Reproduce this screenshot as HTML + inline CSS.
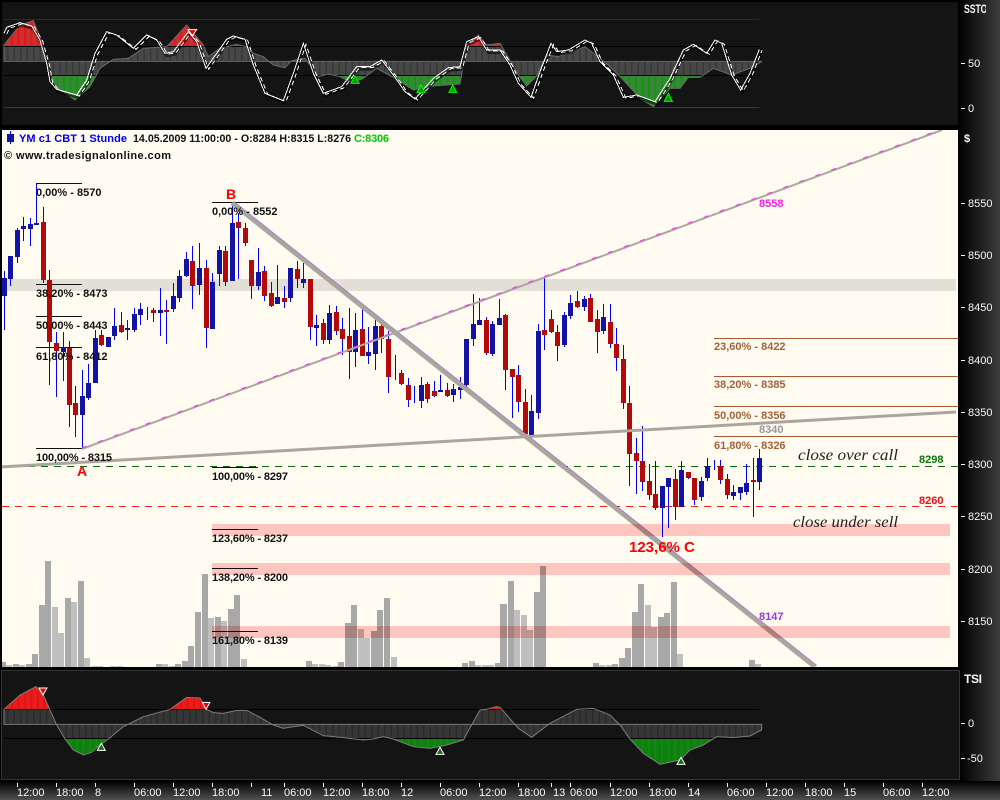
<!DOCTYPE html>
<html><head><meta charset="utf-8"><title>YM c1 CBT 1 Stunde</title>
<style>html,body{margin:0;padding:0;background:#000;width:1000px;height:800px;overflow:hidden}svg{display:block}
text{font-family:"Liberation Sans",sans-serif}
.ax{fill:#f8f8f0;font-size:11px}.fib{fill:#111;font-size:11px;font-weight:bold}.br{fill:#a5623a;font-size:11px;font-weight:bold}
.hw{font-family:"Liberation Serif",serif;font-style:italic;fill:#222;font-size:16px}</style></head>
<body>
<svg width="1000" height="800" viewBox="0 0 1000 800" xmlns="http://www.w3.org/2000/svg">
<defs>
<linearGradient id="rg" x1="0" x2="1"><stop offset="0" stop-color="#000"/><stop offset="1" stop-color="#3c3c3c"/></linearGradient>
<linearGradient id="bg" x1="0" x2="0" y1="0" y2="1"><stop offset="0" stop-color="#000"/><stop offset="1" stop-color="#505050"/></linearGradient>
<pattern id="pg" patternUnits="userSpaceOnUse" x="6" y="0" width="19.5" height="10"><rect width="19.5" height="10" fill="#383838"/><rect width="15" height="10" fill="#474747"/></pattern>
<pattern id="pr" patternUnits="userSpaceOnUse" x="6" y="0" width="19.5" height="10"><rect width="19.5" height="10" fill="#c93030"/><rect x="8" width="5" height="10" fill="#ee0f0f"/></pattern>
<pattern id="pn" patternUnits="userSpaceOnUse" x="6" y="0" width="19.5" height="10"><rect width="19.5" height="10" fill="#3a873a"/><rect x="8" width="5" height="10" fill="#0b980b"/></pattern>
<pattern id="pg2" patternUnits="userSpaceOnUse" x="6" y="0" width="19.5" height="10"><rect width="19.5" height="10" fill="#2a2a2a"/><rect width="15" height="10" fill="#363636"/></pattern>
<pattern id="pr2" patternUnits="userSpaceOnUse" x="6" y="0" width="19.5" height="10"><rect width="19.5" height="10" fill="#e32020"/><rect x="8" width="5" height="10" fill="#f50808"/></pattern>
<pattern id="pn2" patternUnits="userSpaceOnUse" x="6" y="0" width="19.5" height="10"><rect width="19.5" height="10" fill="#127e12"/><rect x="8" width="5" height="10" fill="#0a900a"/></pattern>
<clipPath id="ca"><rect x="0" y="0" width="3000" height="139"/></clipPath>
<clipPath id="cb"><rect x="0" y="139" width="3000" height="87"/></clipPath>
<clipPath id="cc"><rect x="0" y="226" width="3000" height="200"/></clipPath>
<clipPath id="da"><rect x="0" y="0" width="3000" height="133"/></clipPath>
<clipPath id="db"><rect x="0" y="133" width="3000" height="87"/></clipPath>
<clipPath id="dc"><rect x="0" y="220" width="3000" height="200"/></clipPath>
<clipPath id="mc"><rect x="2" y="130" width="956" height="537"/></clipPath>
<clipPath id="sc"><rect x="960" y="0" width="26" height="20"/></clipPath>
<path id="gs" d="M12 184L12 135 60 75 100 62 130 135 150 225 170 262 225 300 270 260 300 205 340 178 385 175 430 145 500 140 560 75 610 135 625 170 660 145 710 133 740 140 760 160 790 170 820 195 855 203 875 182 915 175 955 230 985 222 1020 230 1050 245 1085 238 1130 205 1185 235 1240 270 1300 258 1380 252 1400 135 1435 105 1460 135 1500 130 1555 225 1580 258 1610 228 1640 165 1675 170 1755 140 1800 175 1830 200 1865 235 1920 295 1960 320 2010 265 2040 265 2065 232 2100 232 2140 205 2195 225 2250 205 2285 185 2285 184Z"/>
<path id="ts" d="M12 178L12 133 60 90 108 65 130 90 150 135 170 180 195 222 220 255 250 270 275 262 300 240 325 222 370 185 410 165 430 155 510 133 560 97 600 99 620 133 640 143 670 145 710 136 740 136 780 157 820 180 850 190 880 185 910 181 970 212 1030 218 1090 225 1120 222 1150 215 1180 222 1240 245 1290 250 1340 240 1390 225 1440 135 1460 133 1490 125 1500 127 1520 150 1555 190 1595 217 1630 190 1650 175 1730 133 1780 130 1830 150 1860 180 1890 222 1930 265 1980 298 2040 285 2070 255 2110 240 2150 215 2200 218 2250 213 2285 195 2285 178Z"/>
<path id="wl" d="M12 100L20 82 60 68 95 78 120 120 140 190 150 245 170 268 230 285 260 240 285 160 320 95 350 105 400 145 440 105 470 120 495 160 520 155 565 95 590 125 618 205 680 118 700 108 735 118 760 195 795 280 850 302 880 220 910 130 940 220 970 280 1025 260 1070 200 1110 200 1145 180 1180 225 1215 275 1245 297 1300 235 1345 203 1380 200 1400 125 1435 110 1460 150 1500 150 1530 195 1555 250 1593 292 1620 215 1653 130 1670 155 1705 150 1755 120 1775 130 1800 185 1840 225 1870 292 1910 285 1965 305 2010 235 2050 150 2080 133 2120 160 2145 120 2165 130 2195 225 2222 270 2250 220 2278 148"/>
</defs>

<rect width="1000" height="800" fill="#000"/>
<rect x="959" y="0" width="41" height="800" fill="url(#rg)"/>
<rect x="0" y="781" width="1000" height="19" fill="url(#bg)"/>

<!-- SSTO panel -->
<rect x="2" y="2" width="956" height="123" fill="#141414"/>
<g transform="scale(.33333)">
<use href="#gs" fill="url(#pg)" clip-path="url(#cb)"/>
<use href="#gs" fill="url(#pr)" clip-path="url(#ca)"/>
<use href="#gs" fill="url(#pn)" clip-path="url(#cc)"/>
<path d="M12 58.5H2278" stroke="#7a0808" stroke-width="3" fill="none"/>
<path d="M12 139.500H2278M12 226.500H2278" stroke="#000" stroke-width="3" fill="none"/>
<path d="M12 184H2278" stroke="#000" stroke-width="3" stroke-dasharray="14 6" fill="none"/>
<path d="M12 322.500H2278" stroke="#0c5a0c" stroke-width="3" fill="none"/>
<use href="#gs" fill="none" stroke="#6a6a6a" stroke-width="3"/>
<use href="#wl" transform="translate(5,8)" fill="none" stroke="#000" stroke-width="8" opacity=".55"/>
<use href="#wl" fill="none" stroke="#fff" stroke-width="3" shape-rendering="crispEdges"/>
<use href="#wl" transform="translate(8,3)" fill="none" stroke="#fff" stroke-width="3" stroke-dasharray="14 10" shape-rendering="crispEdges"/>
<path d="M564 89H590L577 107Z" fill="#e00" stroke="#fff" stroke-width="3"/>
<path d="M1065 228L1053 250H1077Z M1263 255L1251 278H1275Z M1358 255L1347 277H1370Z M2005 280L1993 304H2017Z" fill="#090" stroke="#0f0" stroke-width="3"/>
</g>

<!-- Main chart -->
<rect x="2" y="130" width="956" height="537" fill="#fffbf0"/>
<g clip-path="url(#mc)">
<rect x="2" y="279" width="954" height="12" fill="#e2dfd7"/>
<!-- Volume -->
<g transform="translate(0,540) scale(.33333)">
<path fill="#a8a8a8" d="M6 366H18V381H6zM39 372H57V381H39zM78 372H96V381H78zM96 342H114V381H96zM117 195H135V381H117zM135 63H153V381H135zM195 174H213V381H195zM234 123H252V381H234zM468 372H486V381H468zM525 372H543V381H525zM546 363H564V381H546zM564 318H582V381H564zM585 216H603V381H585zM606 102H624V381H606zM645 231H663V381H645zM684 207H702V381H684zM702 165H720V381H702zM918 363H936V381H918zM1014 366H1032V381H1014zM1035 249H1053V381H1035zM1053 195H1071V381H1053zM1113 273H1131V381H1113zM1131 210H1149V381H1131zM1152 174H1170V381H1152zM1386 369H1404V381H1386zM1407 363H1425V381H1407zM1485 369H1503V381H1485z"/>
<path fill="#bfbfbf" d="M18 375H36V381H18zM57 375H75V381H57zM156 201H174V381H156zM174 279H192V381H174zM213 186H231V381H213zM252 354H270V381H252zM273 378H291V381H273zM291 378H309V381H291zM330 378H348V381H330zM351 378H369V381H351zM486 372H504V381H486zM507 378H525V381H507zM624 234H642V381H624zM663 243H681V381H663zM723 357H741V381H723zM936 372H954V381H936zM957 372H975V381H957zM975 375H993V381H975zM996 378H1014V381H996zM1074 267H1092V381H1074zM1092 294H1110V381H1092zM1173 351H1191V381H1173zM1425 375H1443V381H1425zM1446 375H1464V381H1446zM1464 375H1482V381H1464z"/>
</g>
<g transform="translate(500,540) scale(.33333)">
<path fill="#a8a8a8" d="M0 192H21V381H0zM24 123H42V381H24zM102 156H120V381H102zM120 78H138V381H120zM279 369H297V381H279zM336 372H354V381H336zM357 354H375V381H357zM375 324H393V381H375zM396 216H414V381H396zM414 132H432V381H414zM474 231H492V381H474zM492 219H510V381H492zM513 126H531V381H513zM747 360H765V381H747z"/>
<path fill="#bfbfbf" d="M42 210H60V381H42zM63 225H81V381H63zM81 270H99V381H81zM297 375H315V381H297zM318 375H336V381H318zM435 195H453V381H435zM453 261H471V381H453zM531 342H549V381H531zM765 372H783V381H765z"/>
</g>

<!-- Dashed levels -->
<path d="M2 466.500H958" stroke="#0a6a0a" stroke-width="1" stroke-dasharray="7 6" fill="none"/>
<path d="M2 506.500H958" stroke="#f02020" stroke-width="1" stroke-dasharray="7 6" fill="none"/>

<!-- Fib lines -->
<path d="M36 183.500H82M36 284.500H82M36 316.500H82M36 347.500H82M36 448.500H82M212 202.500H258M212 467.500H258M212 529.500H258M212 568.500H258M212 631.500H258" stroke="#111" stroke-width="1" fill="none" shape-rendering="crispEdges"/>
<path d="M714 338.500H958M714 376.500H958M714 406.500H958M714 436.500H958" stroke="#a85a30" stroke-width="1" fill="none" shape-rendering="crispEdges"/>

<!-- Wicks -->
<path shape-rendering="crispEdges" stroke="#0000ff" stroke-width="1" fill="none" d="M4.500 271V330M10.500 256V286M17.500 228V263M23.500 217V241M30.500 218V246M36.500 183V225M43.500 207V283M49.500 270V385M56.500 332V397M63.500 332V381M69.500 341V427M75.500 386V437M82.500 370V448M88.500 364V400M95.500 330V383M101.500 330V346M108.500 337V347M114.500 308V340M121.500 312V333M127.500 320V340M134.500 308V332M140.500 303V325M147.500 307V320M153.500 308V322M160.500 288V336M166.500 300V344M173.500 283V312M179.500 270V302M186.500 252V277M192.500 246V309M199.500 243V295M206.500 260V348M212.500 273V329M219.500 246V286M225.500 246V286M232.500 203V281M238.500 213V279M245.500 223V246M251.500 260V299M258.500 248V290M264.500 266V301M271.500 282V307M277.500 265V304M284.500 286V308M290.500 268V302M297.500 261V288M303.500 263V288M310.500 279V340M316.500 315V346M323.500 319V344M329.500 305V344M336.500 306V335M342.500 318V355M349.500 308V379M355.500 313V367M362.500 309V356M368.500 327V364M375.500 316V370M381.500 320V353M388.500 331V393M395.500 355V380M401.500 370V385M408.500 378V407M414.500 386V403M421.500 377V408M427.500 382V403M434.500 381V397M440.500 375V392M447.500 383V397M453.500 384V402M460.500 377V399M466.500 339V392M473.500 294V346M479.500 298V325M486.500 317V355M492.500 321V356M499.500 299V325M505.500 314V390M512.500 369V418M518.500 365V412M525.500 389V436M531.500 395V435M538.500 324V419M544.500 276V350M551.500 310V333M557.500 325V361M564.500 312V347M570.500 295V319M577.500 291V308M584.500 296V311M590.500 294V322M597.500 310V353M603.500 304V334M610.500 304V348M616.500 328V371M623.500 345V409M629.500 386V486M636.500 438V494M642.500 426V491M649.500 464V500M655.500 461V510M662.500 486V537M668.500 478V528M675.500 469V520M681.500 461V507M688.500 472V479M694.500 478V505M701.500 477V501M707.500 458V481M714.500 460V470M720.500 460V484M727.500 474V499M733.500 485V500M740.500 487V500M746.500 464V495M753.500 458V517M759.500 449V490"/>
<!-- Blue bodies -->
<path shape-rendering="crispEdges" stroke="#1212a4" stroke-width="5" fill="none" d="M4.500 278V296M10.500 256V279M17.500 230V257M23.500 226V229M30.500 224V229M36.500 223V225M63.500 347V352M82.500 396V415M88.500 383V398M95.500 338V383M108.500 337V347M114.500 326V336M127.500 328V330M134.500 314V330M140.500 309V315M160.500 310V313M173.500 296V309M179.500 276V298M186.500 259V276M199.500 268V285M212.500 282V329M219.500 250V274M232.500 223V281M258.500 272V286M277.500 297V304M290.500 268V298M303.500 279V283M316.500 325V328M329.500 313V340M355.500 330V352M368.500 352V356M375.500 326V354M421.500 385V401M440.500 390V392M453.500 389V395M460.500 387V390M466.500 339V385M473.500 324V339M479.500 320V325M492.500 324V354M499.500 318V325M531.500 411V435M538.500 331V413M564.500 315V345M570.500 303V316M584.500 299V307M603.500 317V331M662.500 486V508M668.500 478V487M681.500 470V507M701.500 481V497M707.500 466V478M733.500 492V496M740.500 487V493M746.500 483V492M759.500 458V482"/>
<!-- Red bodies -->
<path shape-rendering="crispEdges" stroke="#b50808" stroke-width="5" fill="none" d="M43.500 222V280M49.500 280V342M56.500 343V351M69.500 348V405M75.500 403V415M101.500 335V345M121.500 325V332M153.500 310V313M166.500 310V312M192.500 261V286M206.500 268V328M225.500 251V282M238.500 222V228M245.500 228V243M251.500 260V286M264.500 271V296M271.500 293V306M284.500 298V302M297.500 269V279M310.500 279V327M323.500 323V340M336.500 312V331M342.500 329V339M349.500 336V352M362.500 329V356M381.500 326V339M388.500 339V377M401.500 373V384M408.500 385V400M427.500 384V399M434.500 391V396M447.500 390V396M486.500 320V353M505.500 315V370M512.500 369V377M518.500 375V402M525.500 402V434M544.500 330V335M551.500 319V332M557.500 332V346M577.500 301V307M590.500 298V322M597.500 319V332M610.500 322V344M616.500 344V358M623.500 359V403M629.500 403V454M636.500 453V461M642.500 461V482M649.500 481V495M655.500 494V508M675.500 479V507M688.500 472V478M694.500 478V500M720.500 466V480M727.500 479V495M753.500 480V482"/>

<!-- Trend lines -->
<path d="M232 203L815 667" stroke="#8a2be2" stroke-width="1" fill="none" transform="translate(1.500,-1.500)"/>
<path d="M232 203L815 667" stroke="#aaa69e" stroke-width="4.500" fill="none"/>
<path d="M82 449L942 130" stroke="#aca89f" stroke-width="2" fill="none"/>
<path d="M82 448L942 129" stroke="#ff20ff" stroke-width="1" stroke-dasharray="5 12" fill="none"/>
<path d="M0 467L956 412" stroke="#aaa69e" stroke-width="3" fill="none"/>

<!-- Pink bands -->
<g style="mix-blend-mode:multiply" fill="#ffc6c0"><rect x="212" y="524" width="738" height="12"/><rect x="212" y="563" width="738" height="12"/><rect x="212" y="626" width="738" height="12"/></g>

<!-- Labels -->
<text class="fib" x="36" y="196">0,00% - 8570</text>
<text class="fib" x="36" y="297">38,20% - 8473</text>
<text class="fib" x="36" y="329">50,00% - 8443</text>
<text class="fib" x="36" y="360">61,80% - 8412</text>
<text class="fib" x="36" y="461" textLength="76">100,00% - 8315</text>
<text class="fib" x="212" y="215">0,00% - 8552</text>
<text class="fib" x="212" y="480" textLength="76">100,00% - 8297</text>
<text class="fib" x="212" y="542" textLength="76">123,60% - 8237</text>
<text class="fib" x="212" y="581" textLength="76">138,20% - 8200</text>
<text class="fib" x="212" y="644" textLength="76">161,80% - 8139</text>
<text class="br" x="714" y="350">23,60% - 8422</text>
<text class="br" x="714" y="388">38,20% - 8385</text>
<text class="br" x="714" y="419">50,00% - 8356</text>
<text class="br" x="714" y="449">61,80% - 8326</text>
<text x="759" y="433" font-size="11" font-weight="bold" fill="#9a9a9a">8340</text>
<text x="919" y="463" font-size="11" font-weight="bold" fill="#0a7a0a">8298</text>
<text x="919" y="504" font-size="11" font-weight="bold" fill="#f01010">8260</text>
<text x="759" y="207" font-size="11" font-weight="bold" fill="#f020f0">8558</text>
<text x="759" y="620" font-size="11" font-weight="bold" fill="#9933ee">8147</text>
<text x="226" y="199" font-size="14" font-weight="bold" fill="#f00">B</text>
<text x="77" y="476" font-size="14" font-weight="bold" fill="#f00">A</text>
<text x="629" y="552" font-size="15" font-weight="bold" fill="#f00">123,6% C</text>
<text class="hw" x="798" y="460" textLength="100" lengthAdjust="spacingAndGlyphs">close over  call</text>
<text class="hw" x="793" y="527" textLength="105" lengthAdjust="spacingAndGlyphs">close under sell</text>

<!-- Header -->
<path d="M10.500 131V144" stroke="#0000ff" stroke-width="1" shape-rendering="crispEdges"/>
<rect x="7" y="134" width="7" height="8" fill="#1212a4"/>
<text x="19" y="142" font-size="11" font-weight="bold" fill="#0000ee" textLength="108">YM c1 CBT 1 Stunde</text>
<text x="133" y="142" font-size="11" font-weight="bold" fill="#111" textLength="218" lengthAdjust="spacingAndGlyphs">14.05.2009 11:00:00 - O:8284 H:8315 L:8276</text>
<text x="354" y="142" font-size="11" font-weight="bold" fill="#0c0" textLength="35">C:8306</text>
<text x="4" y="159" font-size="11" font-weight="bold" fill="#111" textLength="167">© www.tradesignalonline.com</text>
</g>

<!-- TSI panel -->
<rect x="1.500" y="670.500" width="958" height="109" fill="#141414" stroke="#333"/>
<g transform="translate(0,665) scale(.33333)">
<use href="#ts" fill="url(#pg2)" clip-path="url(#db)"/>
<use href="#ts" fill="url(#pr2)" clip-path="url(#da)"/>
<use href="#ts" fill="url(#pn2)" clip-path="url(#dc)"/>
<path d="M12 133.500H2278M12 220.500H2278" stroke="#000" stroke-width="3" fill="none"/>
<path d="M12 178H2278" stroke="#000" stroke-width="3" stroke-dasharray="14 6" fill="none"/>
<use href="#ts" fill="none" stroke="#7c7c7c" stroke-width="3"/>
<path d="M117 69H141L129 90Z M607 112H630L618 133Z" fill="#e00" stroke="#fff" stroke-width="3"/>
<path d="M304 235L292 256H316Z M1320 247L1308 268H1332Z M2043 277L2031 298H2055Z" fill="#070" stroke="#fff" stroke-width="3"/>
</g>

<!-- Right axis -->
<g stroke="#f8f8f0" stroke-width="1" shape-rendering="crispEdges" fill="none">
<path d="M961 63.500H965M961 108.500H965M961 203.500H965M961 255.500H965M961 307.500H965M961 360.500H965M961 412.500H965M961 464.500H965M961 516.500H965M961 569.500H965M961 621.500H965M961 723.500H965M961 758.500H965"/>
<path d="M17.500 783V787M56.500 783V787M95.500 783V787M134.500 783V787M173.500 783V787M212.500 783V787M251.500 783V787M284.500 783V787M323.500 783V787M362.500 783V787M401.500 783V787M440.500 783V787M479.500 783V787M518.500 783V787M551.500 783V787M570.500 783V787M610.500 783V787M649.500 783V787M688.500 783V787M727.500 783V787M766.500 783V787M805.500 783V787M844.500 783V787M883.500 783V787M922.500 783V787"/>
</g>
<g clip-path="url(#sc)"><text transform="translate(964,13) scale(.72,1)" font-size="12" font-weight="bold" fill="#f8f8f0">SSTO</text></g>
<text class="ax" x="968" y="67">50</text>
<text class="ax" x="968" y="112">0</text>
<text class="ax" x="964" y="142" font-weight="bold">$</text>
<text class="ax" x="968" y="207">8550</text>
<text class="ax" x="968" y="259">8500</text>
<text class="ax" x="968" y="311">8450</text>
<text class="ax" x="968" y="364">8400</text>
<text class="ax" x="968" y="416">8350</text>
<text class="ax" x="968" y="468">8300</text>
<text class="ax" x="968" y="520">8250</text>
<text class="ax" x="968" y="573">8200</text>
<text class="ax" x="968" y="625">8150</text>
<text x="964" y="683" font-size="12" font-weight="bold" fill="#f8f8f0" textLength="18">TSI</text>
<text class="ax" x="968" y="727">0</text>
<text class="ax" x="967" y="762">-50</text>

<!-- Time axis -->
<g>
<text class="ax" x="17" y="796">12:00</text><text class="ax" x="56" y="796">18:00</text><text class="ax" x="95" y="796">8</text><text class="ax" x="134" y="796">06:00</text><text class="ax" x="173" y="796">12:00</text><text class="ax" x="212" y="796">18:00</text><text class="ax" x="261" y="796">11</text><text class="ax" x="284" y="796">06:00</text><text class="ax" x="323" y="796">12:00</text><text class="ax" x="362" y="796">18:00</text><text class="ax" x="401" y="796">12</text><text class="ax" x="440" y="796">06:00</text><text class="ax" x="479" y="796">12:00</text><text class="ax" x="518" y="796">18:00</text><text class="ax" x="553" y="796">13</text><text class="ax" x="570" y="796">06:00</text><text class="ax" x="610" y="796">12:00</text><text class="ax" x="649" y="796">18:00</text><text class="ax" x="688" y="796">14</text><text class="ax" x="727" y="796">06:00</text><text class="ax" x="766" y="796">12:00</text><text class="ax" x="805" y="796">18:00</text><text class="ax" x="844" y="796">15</text><text class="ax" x="883" y="796">06:00</text><text class="ax" x="922" y="796">12:00</text>
</g>
</svg>
</body></html>
